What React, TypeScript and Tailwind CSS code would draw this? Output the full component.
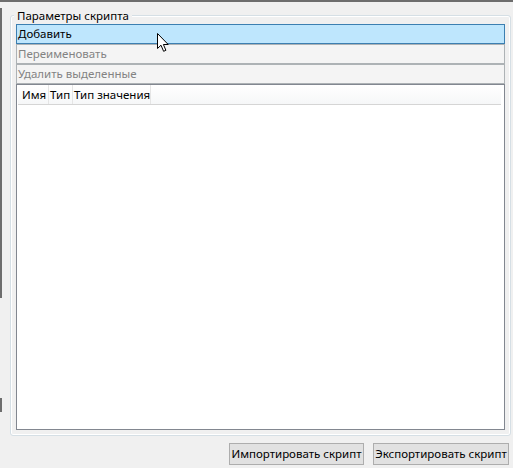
import React from "react";

const font = { fontFamily: '"Noto Sans", "Segoe UI", sans-serif' };

function ActionButton({
  label,
  hover,
  disabled,
}: {
  label: string;
  hover?: boolean;
  disabled?: boolean;
}) {
  return (
    <button
      disabled={disabled}
      className={
        hover
          ? "flex h-[20px] w-full items-center whitespace-nowrap border border-[#3c7fb1] bg-[#bee6fd] pl-[1px] text-left text-[11.5px] leading-none text-black"
          : "flex h-[20px] w-full items-center whitespace-nowrap border border-[#adb2b5] bg-[#f4f4f4] pl-[1px] text-left text-[11.5px] leading-none text-[#838383]"
      }
    >
      {label}
    </button>
  );
}

function Cursor() {
  return (
    <svg
      width="13"
      height="20"
      viewBox="0 0 13 20"
      className="pointer-events-none absolute left-[157px] top-[33px]"
    >
      <path
        d="M0.5 0.5 L0.5 15.5 L4 12.2 L6.6 18.3 L8.9 17.3 L6.4 11.5 L11.2 11.5 Z"
        fill="#ffffff"
        stroke="#000000"
        strokeWidth="1"
        strokeLinejoin="miter"
      />
    </svg>
  );
}

export default function App() {
  return (
    <div
      className="relative flex h-[468px] w-[513px] flex-col overflow-hidden bg-[#f0f0f0] text-black"
      style={font}
    >
      <div className="h-[2px] w-full bg-[#6d6d6d]" />
      <div className="flex flex-1">
        {/* left frame edge */}
        <div className="flex w-[2px] flex-col">
          <div className="mt-[6px] h-[290px] bg-[#6d6d6d]" />
          <div className="mt-[100px] h-[14px] bg-[#6d6d6d]" />
        </div>

        <fieldset className="ml-[8px] mt-[6px] h-[428px] w-[501px] rounded-[3px] border border-[#d5dfe5] px-[5px] pb-[5px] shadow-[inset_0_0_0_1px_#ffffff]">
          <legend className="-ml-[2px] whitespace-nowrap bg-[#f0f0f0] px-[3px] text-[11.5px] leading-[16px]">
            Параметры скрипта
          </legend>

          <div className="flex h-full flex-col">
            <ActionButton label="Добавить" hover />
            <ActionButton label="Переименовать" disabled />
            <ActionButton label="Удалить выделенные" disabled />

            <div className="flex-1 border border-[#828790] bg-white px-[1px] pr-[3px]">
              <div className="flex h-[20px] whitespace-nowrap border-b border-[#d5d5d5] bg-gradient-to-b from-white to-[#f6f7f8] text-[11.5px] leading-[20px]">
                <div className="w-[31px] border-r border-[#e5e5e5] pl-[4px]">Имя</div>
                <div className="w-[24px] border-r border-[#e5e5e5] pl-[1px]">Тип</div>
                <div className="w-[78px] border-r border-[#e5e5e5] pl-[1px]">Тип значения</div>
              </div>
            </div>
          </div>
        </fieldset>
      </div>

      <div className="flex h-[33px] items-start justify-end gap-[9px] pr-[4px] pt-[7px]">
        <button className="h-[22px] w-[135px] whitespace-nowrap border border-[#adadad] bg-[#e1e1e1] text-[11.5px] leading-none">
          Импортировать скрипт
        </button>
        <button className="h-[22px] w-[136px] whitespace-nowrap border border-[#adadad] bg-[#e1e1e1] text-[11.5px] leading-none">
          Экспортировать скрипт
        </button>
      </div>

      <Cursor />
    </div>
  );
}
